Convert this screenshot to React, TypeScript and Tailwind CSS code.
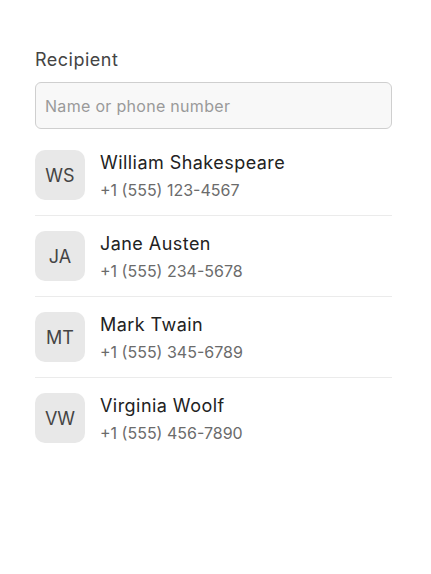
import React from "react"

interface Contact {
  initials: string
  name: string
  phone: string
}

const contacts: Contact[] = [
  { initials: "WS", name: "William Shakespeare", phone: "+1 (555) 123-4567" },
  { initials: "JA", name: "Jane Austen", phone: "+1 (555) 234-5678" },
  { initials: "MT", name: "Mark Twain", phone: "+1 (555) 345-6789" },
  { initials: "VW", name: "Virginia Woolf", phone: "+1 (555) 456-7890" },
]

const ContactRow: React.FC<{ contact: Contact; last: boolean }> = ({ contact, last }) => (
  <li className={`flex items-center gap-[15px] py-[15px] ${last ? "" : "border-b border-[#ebebeb]"}`}>
    <div className="w-[50px] h-[50px] rounded-[10px] bg-[#e8e8e8] flex items-center justify-center text-[18px] text-[#444]">
      {contact.initials}
    </div>
    <div className="flex flex-col pt-[1px]">
      <span className="text-[18px] leading-[24px] tracking-[0.45px] text-[#222]">{contact.name}</span>
      <span className="mt-[5px] text-[16px] leading-[20px] text-[#6b6b6b]">{contact.phone}</span>
    </div>
  </li>
)

export default function App() {
  return (
    <div className="min-h-screen bg-white font-['Inter',sans-serif]">
      <div className="pt-[48px] pl-[35px] w-[392px]">
        <label className="block text-[18px] leading-[24px] tracking-[0.5px] text-[#444] mb-[10px]">Recipient</label>
        <input
          type="text"
          placeholder="Name or phone number"
          className="w-full h-[47px] px-[9px] rounded-[6px] border border-[#cfcfcf] bg-[#f8f8f8] text-[16px] tracking-[0.3px] text-[#222] placeholder:text-[#9a9a9a] outline-none"
        />
        <ul className="mt-[6px]">
          {contacts.map((c, i) => (
            <ContactRow key={c.initials} contact={c} last={i === contacts.length - 1} />
          ))}
        </ul>
      </div>
    </div>
  )
}
